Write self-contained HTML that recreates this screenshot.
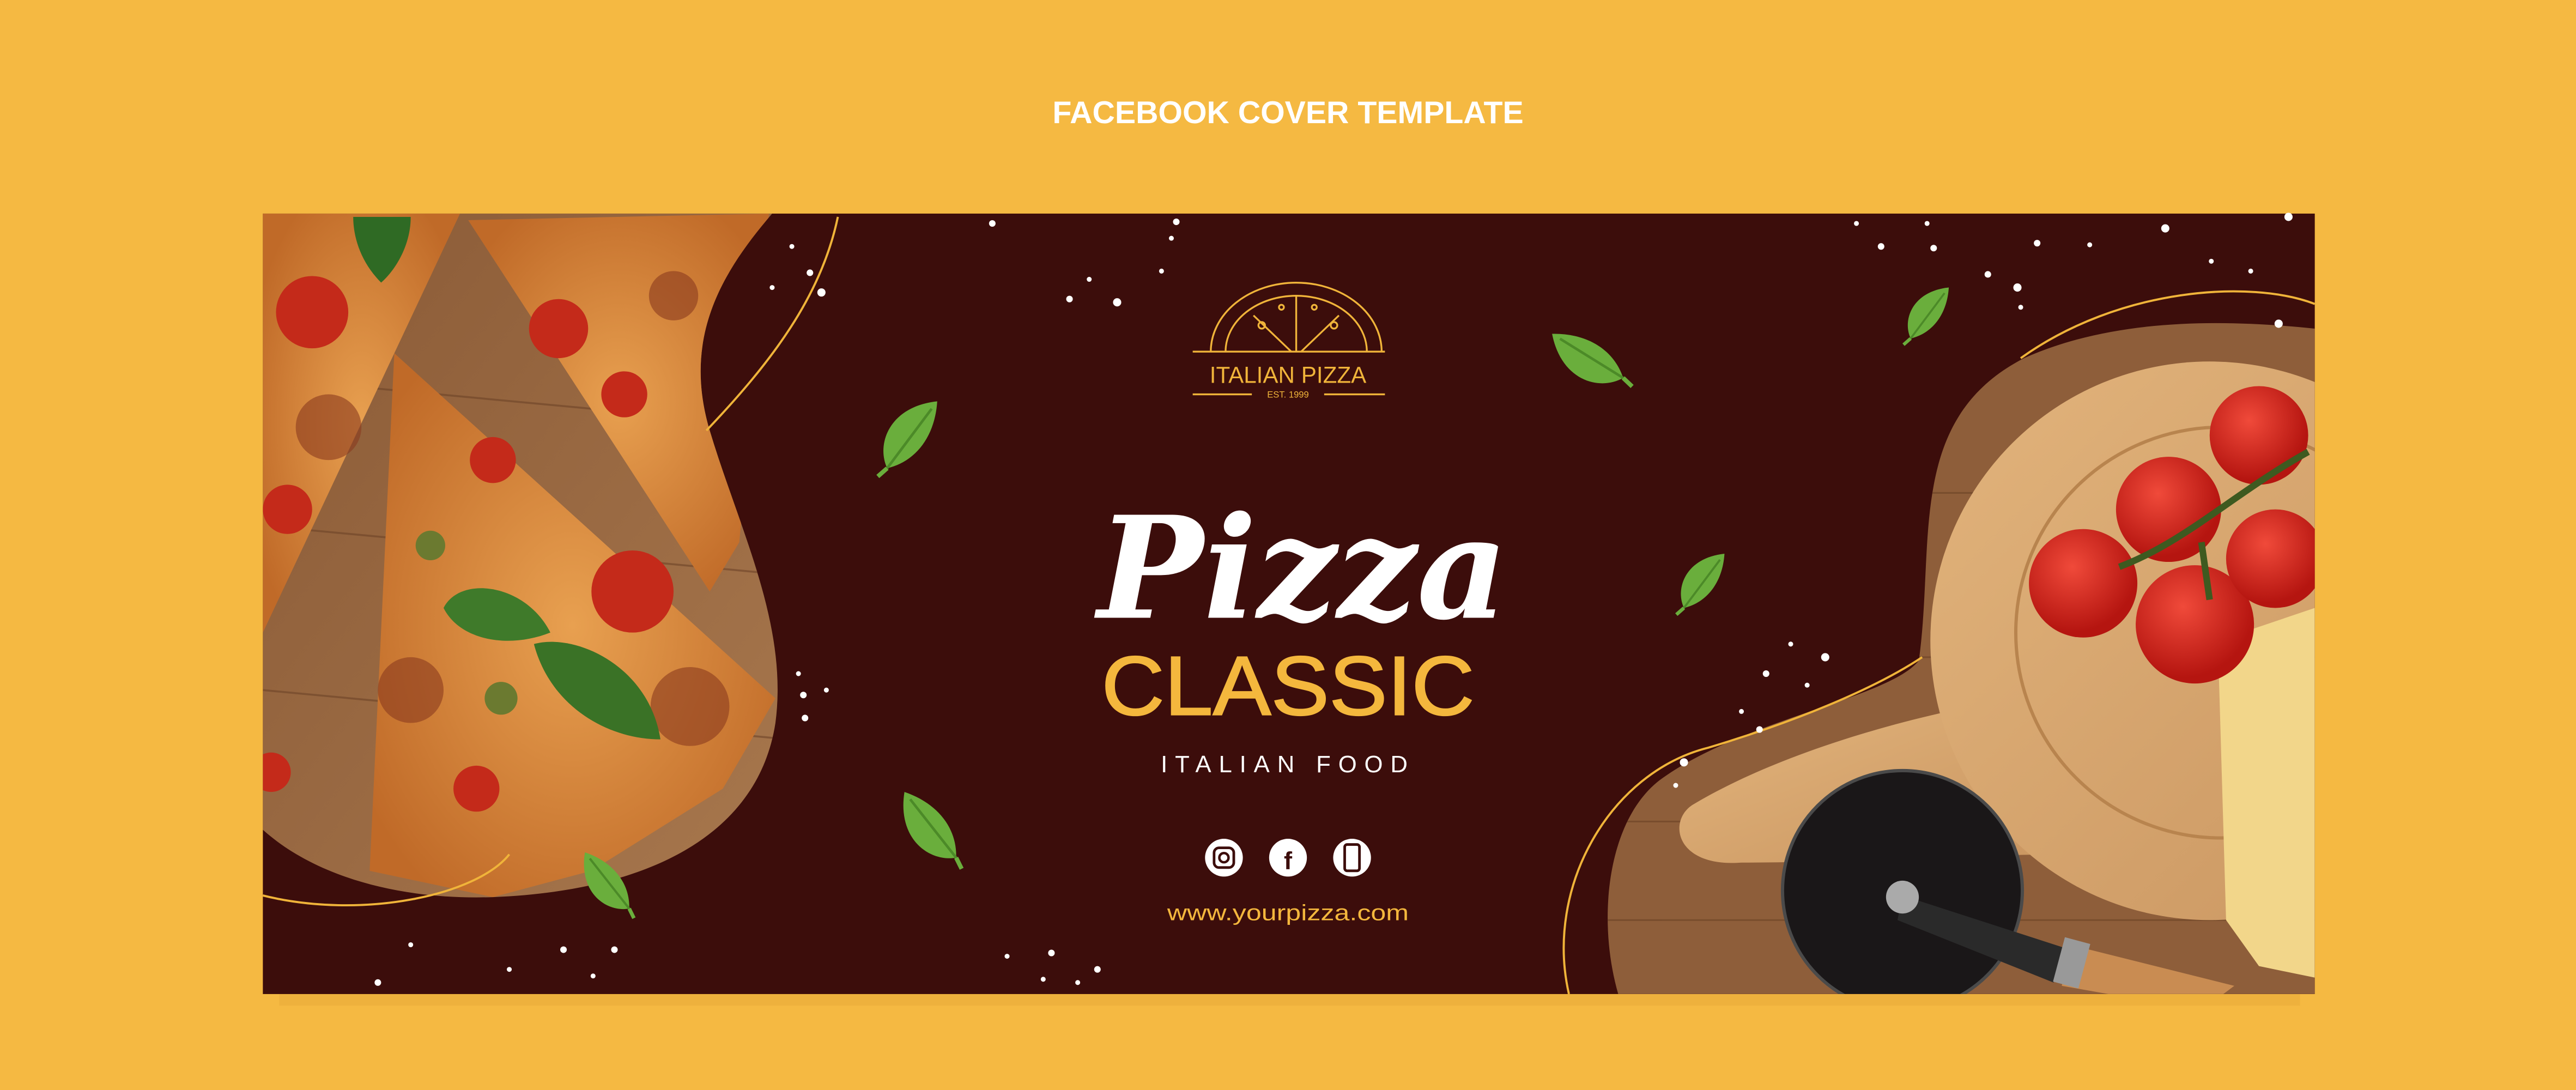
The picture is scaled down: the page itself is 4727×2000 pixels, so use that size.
<!DOCTYPE html>
<html><head><meta charset="utf-8"><style>
html,body{margin:0;padding:0;background:#f5b942;}
svg{display:block}
</style></head><body>
<svg width="4727" height="2000" viewBox="0 0 1568 663.4" preserveAspectRatio="none" xmlns="http://www.w3.org/2000/svg">
<defs>
<linearGradient id="wood" x1="0" y1="0" x2="1" y2="1"><stop offset="0" stop-color="#8a5a36"/><stop offset="1" stop-color="#a8784e"/></linearGradient>
<linearGradient id="board" x1="0" y1="0" x2="1" y2="1"><stop offset="0" stop-color="#e2b47c"/><stop offset="1" stop-color="#c99560"/></linearGradient>
<radialGradient id="tom" cx="0.4" cy="0.35" r="0.6"><stop offset="0" stop-color="#f04a3a"/><stop offset="1" stop-color="#b51510"/></radialGradient>
<radialGradient id="pz" cx="0.5" cy="0.5" r="0.6"><stop offset="0" stop-color="#e8a050"/><stop offset="1" stop-color="#c06a28"/></radialGradient>
<clipPath id="lc"><path d="M160,130 L470,130 C440,165 415,205 432,262 C450,322 480,380 472,440 C462,505 400,542 300,546 C240,548 190,532 160,505 Z"/></clipPath>
<clipPath id="rc"><path d="M1409,200 L1409,605 L985,605 C972,560 978,500 1010,475 C1060,438 1150,425 1168,402 C1178,330 1160,255 1232,218 C1290,192 1360,195 1409,200 Z"/></clipPath>
<g id="leaf"><path d="M0,0 C-10,-12 -8,-35 18,-45 C22,-25 15,-8 0,0 Z" fill="#6aae3c"/><path d="M0,0 L16,-40" stroke="#4c8a28" stroke-width="1.5" fill="none"/><path d="M0,0 L-4,6" stroke="#6aae3c" stroke-width="2.5"/></g>
</defs>
<rect width="1568" height="663.4" fill="#f5b942"/>
<text x="784" y="75" text-anchor="middle" font-family="Liberation Sans, sans-serif" font-weight="bold" font-size="19" fill="#fff">FACEBOOK COVER TEMPLATE</text>
<rect x="170" y="600" width="1230" height="12" fill="#e8a938" opacity="0.5"/>
<rect x="160" y="130" width="1249" height="475" fill="#3c0d0b"/>
<g clip-path="url(#lc)">
<rect x="160" y="130" width="330" height="420" fill="url(#wood)"/>
<g stroke="#6e4428" stroke-width="1.2" opacity="0.6"><path d="M160,230 L480,260"/><path d="M160,320 L480,350"/><path d="M160,420 L480,450"/></g>
<polygon points="160,130 280,130 160,385" fill="url(#pz)"/>
<polygon points="285,134 468,130 450,330 432,360" fill="url(#pz)"/>
<polygon points="240,215 472,425 440,480 360,530 300,546 225,530" fill="url(#pz)"/>
<g fill="#c42a1a"><circle cx="190" cy="190" r="22"/><circle cx="175" cy="310" r="15"/><circle cx="340" cy="200" r="18"/><circle cx="385" cy="360" r="25"/><circle cx="300" cy="280" r="14"/><circle cx="380" cy="240" r="14"/><circle cx="290" cy="480" r="14"/><circle cx="165" cy="470" r="12"/></g>
<g fill="#8a3a1e" opacity="0.6"><circle cx="200" cy="260" r="20"/><circle cx="420" cy="430" r="24"/><circle cx="250" cy="420" r="20"/><circle cx="410" cy="180" r="15"/></g>
<g fill="#6b7a30"><circle cx="262" cy="332" r="9"/><circle cx="305" cy="425" r="10"/></g>
<path d="M270,370 C280,350 320,355 335,385 C310,395 280,390 270,370Z" fill="#3f7a2a"/>
<path d="M325,392 C350,385 395,405 402,450 C370,450 335,430 325,392Z" fill="#3a7226"/>
<path d="M215,132 L250,132 C250,150 240,165 232,172 C220,160 215,145 215,132Z" fill="#2f6a24"/>
</g>
<g clip-path="url(#rc)">
<rect x="970" y="190" width="440" height="420" fill="#8e5e3a"/>
<g stroke="#6a4226" stroke-width="1" opacity="0.6"><path d="M970,300 L1410,300"/><path d="M970,400 L1410,400"/><path d="M970,500 L1410,500"/><path d="M970,560 L1410,560"/></g>
<path d="M1030,490 C1080,460 1150,440 1200,430 L1260,520 C1200,520 1120,525 1060,525 C1020,528 1015,500 1030,490Z" fill="url(#board)"/>
<circle cx="1345" cy="390" r="170" fill="url(#board)"/>
<circle cx="1352" cy="385" r="125" fill="none" stroke="#b8844e" stroke-width="2"/>
<polygon points="1350,390 1409,370 1409,595 1375,588 1355,560" fill="#f2d68a"/>
<g fill="url(#tom)"><circle cx="1268" cy="355" r="33"/><circle cx="1320" cy="310" r="32"/><circle cx="1336" cy="380" r="36"/><circle cx="1375" cy="265" r="30"/><circle cx="1385" cy="340" r="30"/></g>
<path d="M1290,345 C1330,330 1360,300 1405,275 M1340,330 L1345,365" stroke="#3e5a20" stroke-width="4" fill="none"/>
<circle cx="1158" cy="542" r="73" fill="#1a1718" stroke="#4a4a4a" stroke-width="2"/>
<path d="M1158,545 L1260,578 L1250,598 L1155,560Z" fill="#2a2a2a"/>
<circle cx="1158" cy="546" r="10" fill="#aaa"/>
<path d="M1260,575 L1360,600 L1340,615 L1255,600Z" fill="#c98c52"/>
<rect x="1253" y="572" width="16" height="28" fill="#999" transform="rotate(15 1261 586)"/>
</g>
<g fill="none" stroke="#f0b43a" stroke-width="1.3">
<path d="M430,262 C470,220 500,180 510,132"/>
<path d="M160,545 C220,560 290,545 310,520"/>
<path d="M955,605 C940,540 980,470 1040,455 C1090,440 1140,420 1170,400"/>
<path d="M1230,218 C1290,175 1370,170 1409,185"/>
</g>
<g fill="#fff">
<circle cx="493" cy="166" r="2"/><circle cx="500" cy="178" r="2.5"/><circle cx="482" cy="150" r="1.5"/><circle cx="470" cy="175" r="1.5"/>
<circle cx="604" cy="136" r="2"/><circle cx="651" cy="182" r="2"/><circle cx="680" cy="184" r="2.5"/><circle cx="707" cy="165" r="1.5"/><circle cx="716" cy="135" r="2"/><circle cx="713" cy="145" r="1.5"/><circle cx="663" cy="170" r="1.5"/>
<circle cx="489" cy="423" r="2"/><circle cx="490" cy="437" r="2"/><circle cx="503" cy="420" r="1.5"/><circle cx="486" cy="410" r="1.5"/>
<circle cx="343" cy="578" r="2"/><circle cx="361" cy="594" r="1.5"/><circle cx="374" cy="578" r="2"/><circle cx="250" cy="575" r="1.5"/><circle cx="230" cy="598" r="2"/><circle cx="310" cy="590" r="1.5"/>
<circle cx="613" cy="582" r="1.5"/><circle cx="640" cy="580" r="2"/><circle cx="668" cy="590" r="2"/><circle cx="656" cy="598" r="1.5"/><circle cx="635" cy="596" r="1.5"/>
<circle cx="1130" cy="136" r="1.5"/><circle cx="1145" cy="150" r="2"/><circle cx="1177" cy="151" r="2"/><circle cx="1173" cy="136" r="1.5"/><circle cx="1210" cy="167" r="2"/><circle cx="1228" cy="175" r="2.5"/><circle cx="1240" cy="148" r="2"/><circle cx="1230" cy="187" r="1.5"/><circle cx="1272" cy="149" r="1.5"/><circle cx="1318" cy="139" r="2.5"/><circle cx="1346" cy="159" r="1.5"/><circle cx="1370" cy="165" r="1.5"/><circle cx="1393" cy="132" r="2.5"/><circle cx="1387" cy="197" r="2.5"/>
<circle cx="1090" cy="392" r="1.5"/><circle cx="1111" cy="400" r="2.5"/><circle cx="1075" cy="410" r="2"/><circle cx="1100" cy="417" r="1.5"/><circle cx="1060" cy="433" r="1.5"/><circle cx="1071" cy="444" r="2"/><circle cx="1025" cy="464" r="2.5"/><circle cx="1020" cy="478" r="1.5"/>
</g>
<use href="#leaf" transform="translate(540,285) rotate(15) scale(1.05)"/>
<use href="#leaf" transform="translate(988,230) rotate(-80) scale(1.05)"/>
<use href="#leaf" transform="translate(1163,206) rotate(15) scale(0.8)"/>
<use href="#leaf" transform="translate(1025,370) rotate(15) scale(0.85)"/>
<use href="#leaf" transform="translate(582,522) rotate(-60) scale(1.05)"/>
<use href="#leaf" transform="translate(383,553) rotate(-60) scale(0.9)"/>
<g fill="none" stroke="#f0b43a" stroke-width="1.1">
<path d="M737,214 A52,42 0 0 1 841,214"/>
<path d="M746,214 A43,34 0 0 1 832,214"/>
<path d="M789,180 L789,214 M763,192 L786,214 M815,192 L792,214"/>
<path d="M726,214 L843,214 M726,240 L762,240 M806,240 L843,240"/>
<circle cx="768" cy="198" r="2"/><circle cx="812" cy="198" r="2"/><circle cx="780" cy="187" r="1.5"/><circle cx="800" cy="187" r="1.5"/>
</g>
<text x="784" y="233" text-anchor="middle" font-family="Liberation Sans, sans-serif" font-size="14" fill="#f0b43a">ITALIAN PIZZA</text>
<text x="784" y="242" text-anchor="middle" font-family="Liberation Sans, sans-serif" font-size="5.5" fill="#f0b43a">EST. 1999</text>
<text x="793" y="376" text-anchor="middle" font-family="DejaVu Serif, Liberation Serif, serif" font-style="italic" font-weight="bold" font-size="86" fill="#fff" textLength="250" lengthAdjust="spacingAndGlyphs">Pizza</text>
<text x="784" y="435" text-anchor="middle" font-family="Liberation Sans, sans-serif" font-size="51" fill="#f4b73d" stroke="#f4b73d" stroke-width="0.8" textLength="227" lengthAdjust="spacingAndGlyphs">CLASSIC</text>
<text x="784" y="470" text-anchor="middle" font-family="Liberation Sans, sans-serif" font-size="14.5" fill="#fff" letter-spacing="4.6">ITALIAN FOOD</text>
<g fill="#fff"><circle cx="745" cy="522" r="11.5"/><circle cx="784" cy="522" r="11.5"/><circle cx="823" cy="522" r="11.5"/></g>
<rect x="739" y="516" width="12" height="12" rx="3" fill="none" stroke="#3c0d0b" stroke-width="1.6"/>
<circle cx="745" cy="522" r="2.8" fill="none" stroke="#3c0d0b" stroke-width="1.5"/>
<text x="784" y="529" text-anchor="middle" font-family="Liberation Sans, sans-serif" font-weight="bold" font-size="15" fill="#3c0d0b">f</text>
<rect x="818.5" y="514" width="9" height="16" rx="1.5" fill="none" stroke="#3c0d0b" stroke-width="1.6"/>
<text x="784" y="560" text-anchor="middle" font-family="Liberation Sans, sans-serif" font-size="13.5" fill="#f4b73d" textLength="147" lengthAdjust="spacingAndGlyphs">www.yourpizza.com</text>
</svg>
</body></html>
